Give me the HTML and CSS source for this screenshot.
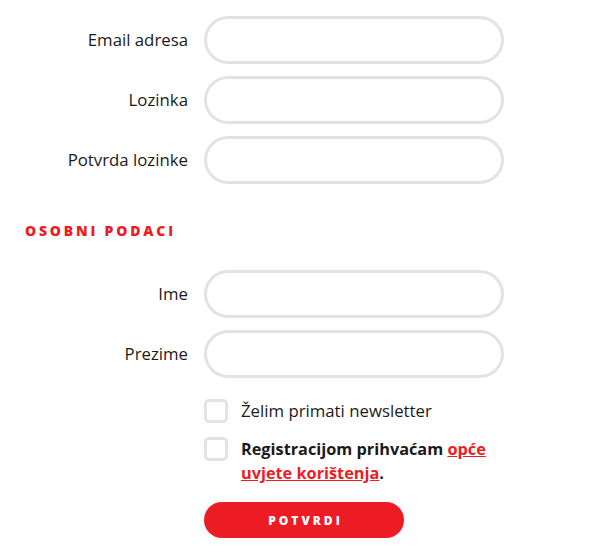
FILE: index.html
```html
<!DOCTYPE html>
<html lang="hr">
<head>
<meta charset="utf-8">
<title>Registracija</title>
<link rel="stylesheet" href="styles.css">
</head>
<body>
<form class="form">
  <div class="row">
    <label class="label" for="email">Email adresa</label>
    <input class="field" id="email" type="text">
  </div>
  <div class="row">
    <label class="label" for="pass">Lozinka</label>
    <input class="field" id="pass" type="password">
  </div>
  <div class="row">
    <label class="label" for="pass2">Potvrda lozinke</label>
    <input class="field" id="pass2" type="password">
  </div>

  <h2 class="section">OSOBNI PODACI</h2>

  <div class="row">
    <label class="label" for="ime">Ime</label>
    <input class="field" id="ime" type="text">
  </div>
  <div class="row">
    <label class="label" for="prezime">Prezime</label>
    <input class="field" id="prezime" type="text">
  </div>

  <div class="checks">
    <label class="check">
      <span class="box"></span>
      <span class="check-text">Želim primati newsletter</span>
    </label>
    <label class="check">
      <span class="box"></span>
      <span class="check-text bold">Registracijom prihvaćam <a class="link" href="#">opće uvjete korištenja</a>.</span>
    </label>
    <button class="submit" type="button">POTVRDI</button>
  </div>
</form>
</body>
</html>
```
FILE: styles.css
```css
html, body {
  margin: 0;
  padding: 0;
  background: #ffffff;
}

body {
  font-family: "Open Sans", "Liberation Sans", sans-serif;
  color: #1a1a1a;
  font-size: 16.8px;
}

.form {
  padding: 16px 0 0 8px;
  display: flex;
  flex-direction: column;
  gap: 12px;
}

.row {
  display: grid;
  grid-template-columns: 180px 300px;
  column-gap: 16px;
  align-items: center;
}

.label {
  text-align: right;
  font-size: 16.8px;
  line-height: 20px;
}

.field {
  box-sizing: border-box;
  width: 300px;
  height: 48px;
  margin: 0;
  border: 3px solid #e3e3e3;
  border-radius: 24px;
  background: #fff;
  outline: none;
}

.section {
  margin: 26px 0 18px 17px;
  font-size: 14px;
  line-height: 18px;
  font-weight: 800;
  letter-spacing: 2.8px;
  color: #ed1c24;
}

.checks {
  margin-left: 196px;
  padding-top: 9px;
  display: flex;
  flex-direction: column;
  gap: 14px;
}

.check {
  display: flex;
  align-items: flex-start;
  gap: 13px;
  width: 300px;
}

.box {
  flex: none;
  box-sizing: border-box;
  width: 24px;
  height: 24px;
  border: 3px solid #e3e3e3;
  border-radius: 5px;
}

.check-text {
  font-size: 16.8px;
  line-height: 24px;
}

.bold {
  font-weight: 700;
  font-size: 16.3px;
  width: 262px;
}

.link {
  color: #ed1c24;
  text-decoration: underline;
}

.submit {
  margin-top: 3px;
  width: 200px;
  height: 36px;
  border: 0;
  border-radius: 18px;
  background: #ed1c24;
  color: #fff;
  font-family: "Open Sans", "Liberation Sans", sans-serif;
  font-weight: 800;
  font-size: 12px;
  letter-spacing: 3px;
  padding: 0 0 0 3px;
}
```
